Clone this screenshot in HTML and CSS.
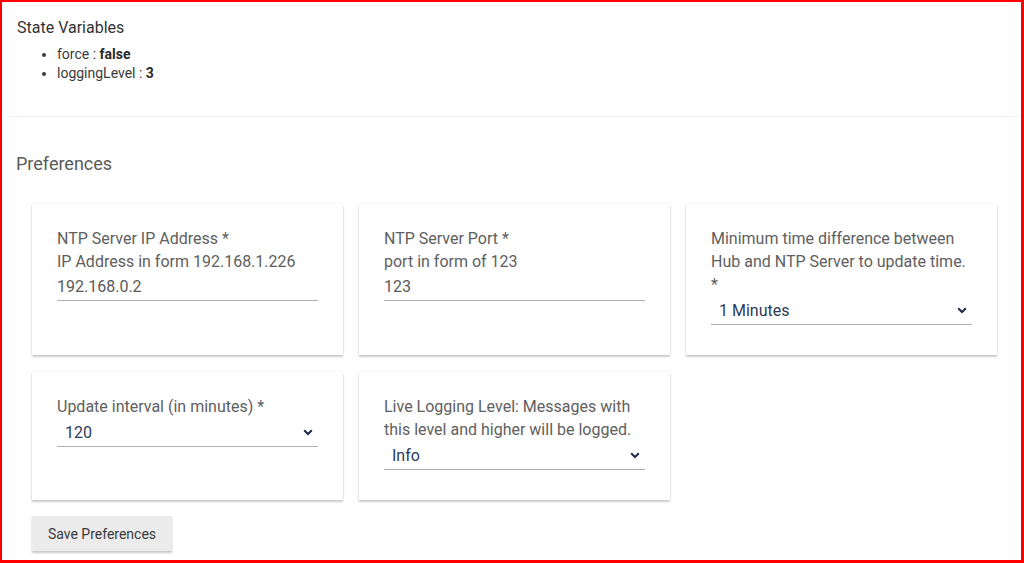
FILE: index.html
```html
<!DOCTYPE html>
<html>
<head>
<meta charset="utf-8">
<link rel="stylesheet" href="styles.css">
</head>
<body>
<div class="frame">
  <section class="state">
    <div class="state-title">State Variables</div>
    <ul class="state-list">
      <li>force : <b>false</b></li>
      <li>loggingLevel : <b>3</b></li>
    </ul>
  </section>
  <div class="sep"></div>
  <section class="prefs">
    <div class="prefs-title">Preferences</div>
    <div class="grid">
      <div class="card">
        <div class="label">NTP Server IP Address *</div>
        <div class="label">IP Address in form 192.168.1.226</div>
        <div class="input">192.168.0.2</div>
      </div>
      <div class="card">
        <div class="label">NTP Server Port *</div>
        <div class="label">port in form of 123</div>
        <div class="input">123</div>
      </div>
      <div class="card">
        <div class="label">Minimum time difference between Hub and NTP Server to update time. *</div>
        <div class="select"><span>1 Minutes</span><svg class="chev" width="10" height="7" viewBox="0 0 10 7"><path d="M1.2 1.3 L5 5 L8.8 1.3" fill="none" stroke="currentColor" stroke-width="2"/></svg></div>
      </div>
      <div class="card">
        <div class="label">Update interval (in minutes) *</div>
        <div class="select"><span>120</span><svg class="chev" width="10" height="7" viewBox="0 0 10 7"><path d="M1.2 1.3 L5 5 L8.8 1.3" fill="none" stroke="currentColor" stroke-width="2"/></svg></div>
      </div>
      <div class="card">
        <div class="label">Live Logging Level: Messages with this level and higher will be logged.</div>
        <div class="select"><span>Info</span><svg class="chev" width="10" height="7" viewBox="0 0 10 7"><path d="M1.2 1.3 L5 5 L8.8 1.3" fill="none" stroke="currentColor" stroke-width="2"/></svg></div>
      </div>
    </div>
    <button class="save">Save Preferences</button>
  </section>
</div>
</body>
</html>
```

FILE: styles.css
```css
html, body {
  margin: 0;
  padding: 0;
  background: #fff;
}
body {
  font-family: Roboto, "Liberation Sans", sans-serif;
  color: #212121;
}
.frame {
  box-sizing: border-box;
  width: 1024px;
  height: 563px;
  border: 2px solid #ff0000;
  border-right-width: 3px;
  border-bottom-width: 3px;
  overflow: hidden;
}
.state {
  padding: 16px 15px 0 15px;
  height: 114px;
  box-sizing: border-box;
}
.state-title {
  font-size: 16px;
  line-height: 20px;
  color: #333;
}
.state-list {
  margin: 7px 0 0 0;
  padding-left: 40px;
  font-size: 14px;
  line-height: 19px;
  color: #3a3a3a;
}
.state-list b {
  font-weight: 700;
  color: #2a2a2a;
}
.sep {
  height: 1px;
  background: #f3f3f3;
  margin: 0 0 0 5px;
}
.prefs {
  padding: 35px 0 0 14px;
}
.prefs-title {
  font-size: 18px;
  line-height: 24px;
  color: #5a5a5a;
}
.grid {
  display: grid;
  grid-template-columns: repeat(3, 311px);
  column-gap: 16px;
  row-gap: 17px;
  margin: 28px 0 0 16px;
}
.card {
  background: #fff;
  padding: 23px 25px 30px 25px;
  box-shadow: 0 2px 2px rgba(0, 0, 0, 0.2), 0 0 2px rgba(0, 0, 0, 0.1);
}
.label {
  font-size: 16px;
  line-height: 23px;
  color: #606060;
}
.input {
  font-size: 16px;
  line-height: 27px;
  color: #5a5a5a;
  border-bottom: 1px solid #b0b0b0;
}
.select {
  display: flex;
  align-items: center;
  justify-content: space-between;
  height: 29px;
  box-sizing: border-box;
  padding: 0 5px 0 8px;
  font-size: 16px;
  color: #2e3a58;
  border-bottom: 1px solid #b0b0b0;
}
.chev {
  color: #1c2a4a;
  display: block;
}
.save {
  margin: 16px 0 0 16px;
  width: 140px;
  height: 35px;
  border: none;
  background: #ebebeb;
  font-family: Roboto, "Liberation Sans", sans-serif;
  font-size: 14px;
  color: #3a3a3a;
  box-shadow: 0 2px 2px rgba(0, 0, 0, 0.22);
  padding: 0;
}
```
